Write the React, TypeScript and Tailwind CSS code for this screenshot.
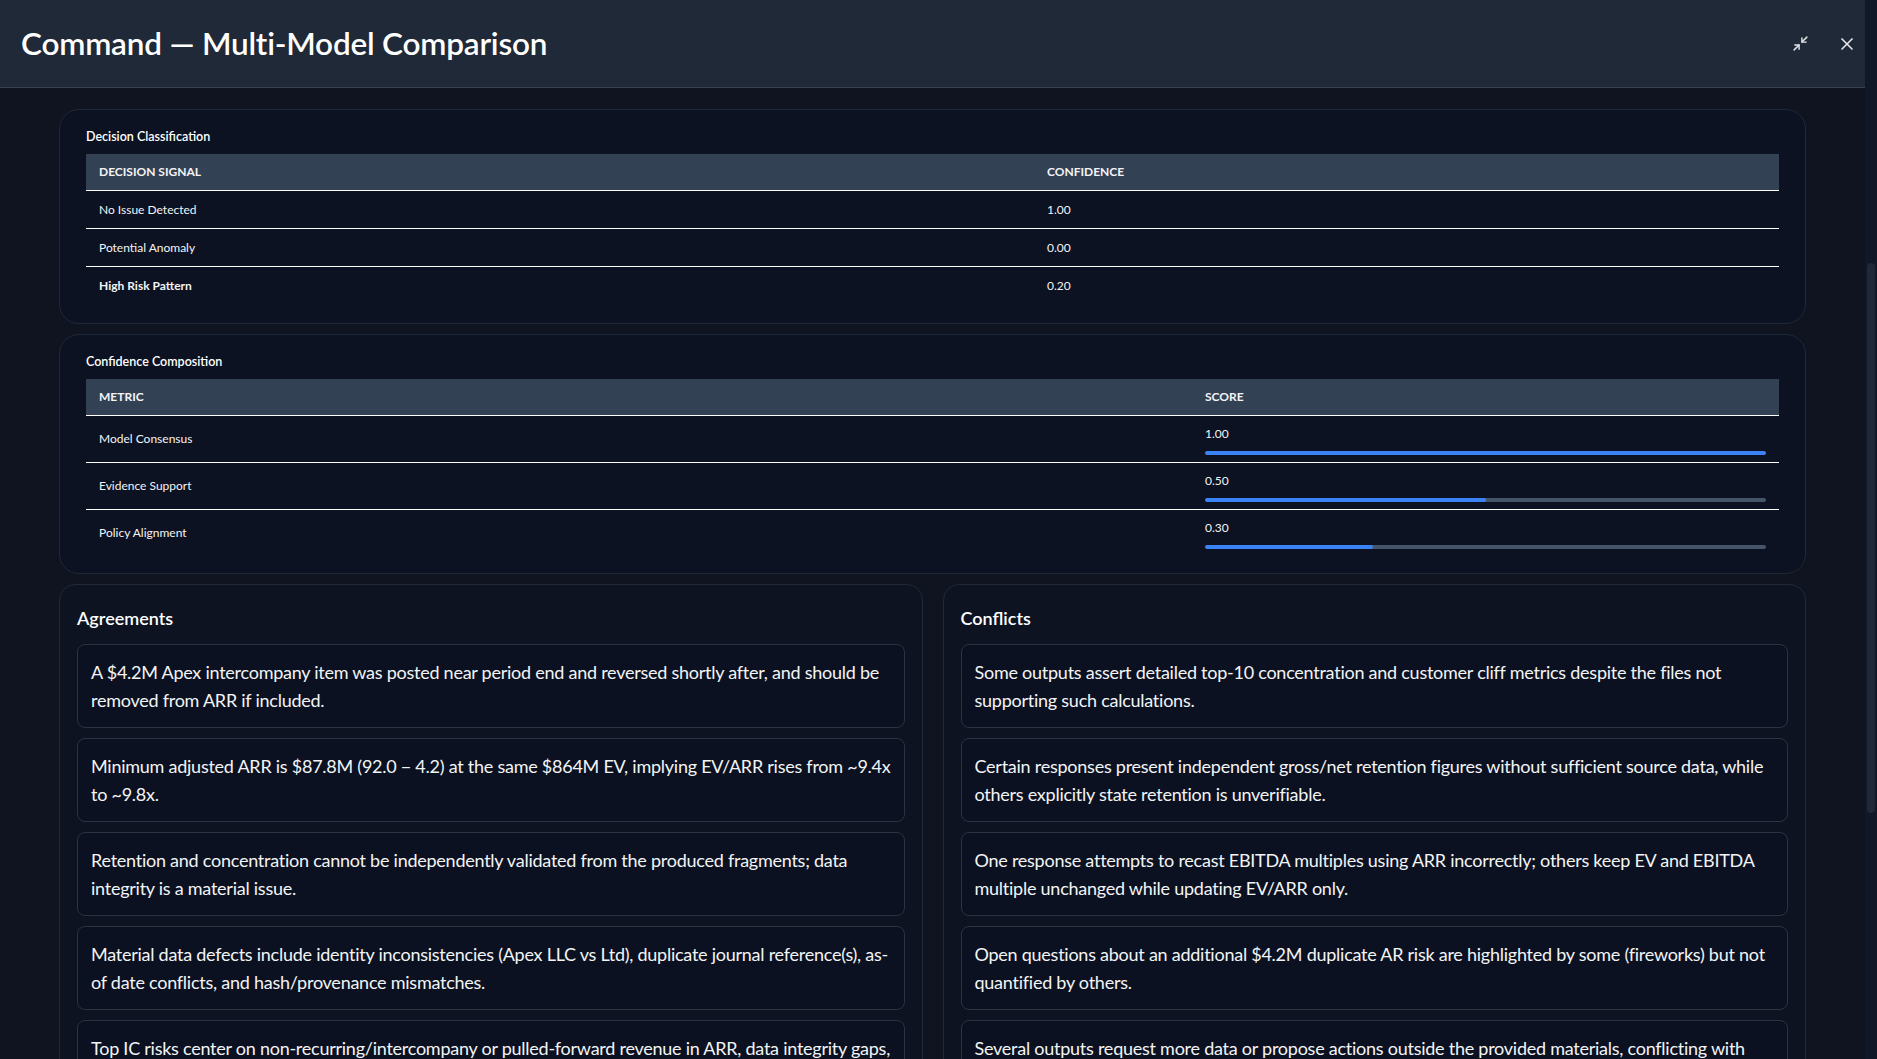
import { Minimize2, X } from 'lucide-react'

const decisions = [
  { label: 'No Issue Detected', value: '1.00', bold: false },
  { label: 'Potential Anomaly', value: '0.00', bold: false },
  { label: 'High Risk Pattern', value: '0.20', bold: true },
]

const metrics = [
  { label: 'Model Consensus', value: 1.0 },
  { label: 'Evidence Support', value: 0.5 },
  { label: 'Policy Alignment', value: 0.3 },
]

const agreements = [
  'A $4.2M Apex intercompany item was posted near period end and reversed shortly after, and should be removed from ARR if included.',
  'Minimum adjusted ARR is $87.8M (92.0 − 4.2) at the same $864M EV, implying EV/ARR rises from ~9.4x to ~9.8x.',
  'Retention and concentration cannot be independently validated from the produced fragments; data integrity is a material issue.',
  'Material data defects include identity inconsistencies (Apex LLC vs Ltd), duplicate journal reference(s), as-of date conflicts, and hash/provenance mismatches.',
  'Top IC risks center on non-recurring/intercompany or pulled-forward revenue in ARR, data integrity gaps, and unverifiable retention metrics.',
]

const conflicts = [
  'Some outputs assert detailed top-10 concentration and customer cliff metrics despite the files not supporting such calculations.',
  'Certain responses present independent gross/net retention figures without sufficient source data, while others explicitly state retention is unverifiable.',
  'One response attempts to recast EBITDA multiples using ARR incorrectly; others keep EV and EBITDA multiple unchanged while updating EV/ARR only.',
  'Open questions about an additional $4.2M duplicate AR risk are highlighted by some (fireworks) but not quantified by others.',
  'Several outputs request more data or propose actions outside the provided materials, conflicting with the instruction to rely only on the supplied files.',
]

function ListCard({ title, items }: { title: string; items: string[] }) {
  return (
    <div className="rounded-2xl border border-[#1f2937] bg-[#0d1321] px-[17px] pt-[20px] pb-4">
      <h3 className="text-[18px] font-semibold text-white mb-[12px]">{title}</h3>
      <div className="flex flex-col gap-[10px]">
        {items.map((t, i) => (
          <div key={i} className="rounded-lg border border-[#2a3342] bg-[#0b1120] px-[13px] py-[13px] text-[18px] leading-[28px] tracking-[-0.25px] text-gray-100">
            {t}
          </div>
        ))}
      </div>
    </div>
  )
}

export default function App() {
  return (
    <div className="h-[1059px] w-[1877px] overflow-hidden flex bg-[#111827]" style={{ fontFamily: 'Lato, "Liberation Sans", sans-serif' }}>
      <div className="flex-1 flex flex-col min-w-0">
        <header className="h-[88px] shrink-0 flex items-center justify-between pl-[21px] pr-[8px] bg-[#1f2937] border-b border-[#374151]">
          <h1 className="text-[31.5px] font-semibold text-white tracking-[-0.2px]">Command — Multi-Model Comparison</h1>
          <div className="flex items-center gap-7 text-gray-200">
            <Minimize2 size={17} strokeWidth={2} />
            <X size={20} strokeWidth={2} />
          </div>
        </header>
        <main className="flex-1 overflow-hidden px-[59px] pt-[21px] flex flex-col gap-[10px] bg-[#0f1420]">
          <section className="rounded-[20px] border border-[#1f2937] bg-[#0c1221] px-[26px] pt-[18px] pb-[18px]">
            <h2 className="text-[12.5px] font-semibold text-white mb-[7px]">Decision Classification</h2>
            <table className="w-full text-[12px] text-gray-100 border-collapse">
              <thead>
                <tr className="bg-[#334155] border-b border-white h-[37px]">
                  <th className="text-left font-bold pl-[13px] w-[961px]">DECISION SIGNAL</th>
                  <th className="text-left font-bold">CONFIDENCE</th>
                </tr>
              </thead>
              <tbody>
                {decisions.map((d, i) => (
                  <tr key={i} className={`h-[38px] ${i < decisions.length - 1 ? 'border-b border-white' : ''}`}>
                    <td className={`pl-[13px] ${d.bold ? 'font-bold' : ''}`}>{d.label}</td>
                    <td>{d.value}</td>
                  </tr>
                ))}
              </tbody>
            </table>
          </section>
          <section className="rounded-[20px] border border-[#1f2937] bg-[#0c1221] px-[26px] pt-[18px] pb-[16px]">
            <h2 className="text-[12.5px] font-semibold text-white mb-[7px]">Confidence Composition</h2>
            <table className="w-full text-[12px] text-gray-100 border-collapse">
              <thead>
                <tr className="bg-[#334155] border-b border-white h-[37px]">
                  <th className="text-left font-bold pl-[13px] w-[1119px]">METRIC</th>
                  <th className="text-left font-bold">SCORE</th>
                </tr>
              </thead>
              <tbody>
                {metrics.map((m, i) => (
                  <tr key={i} className={`h-[47px] ${i < metrics.length - 1 ? 'border-b border-white' : ''}`}>
                    <td className="pl-[13px]">{m.label}</td>
                    <td className="pr-[13px]">
                      <div className="pt-[2px]">{m.value.toFixed(2)}</div>
                      <div className="mt-[8px] h-[4px] rounded-full bg-[#475569] overflow-hidden">
                        <div className="h-full rounded-full bg-[#3b82f6]" style={{ width: `${m.value * 100}%` }} />
                      </div>
                    </td>
                  </tr>
                ))}
              </tbody>
            </table>
          </section>
          <div className="grid grid-cols-2 gap-[20px]">
            <ListCard title="Agreements" items={agreements} />
            <ListCard title="Conflicts" items={conflicts} />
          </div>
        </main>
      </div>
      <div className="w-[12px] shrink-0 bg-[#111827] flex justify-center pt-[263px]">
        <div className="w-[8px] h-[550px] rounded-full bg-[#1f2937]" />
      </div>
    </div>
  )
}
